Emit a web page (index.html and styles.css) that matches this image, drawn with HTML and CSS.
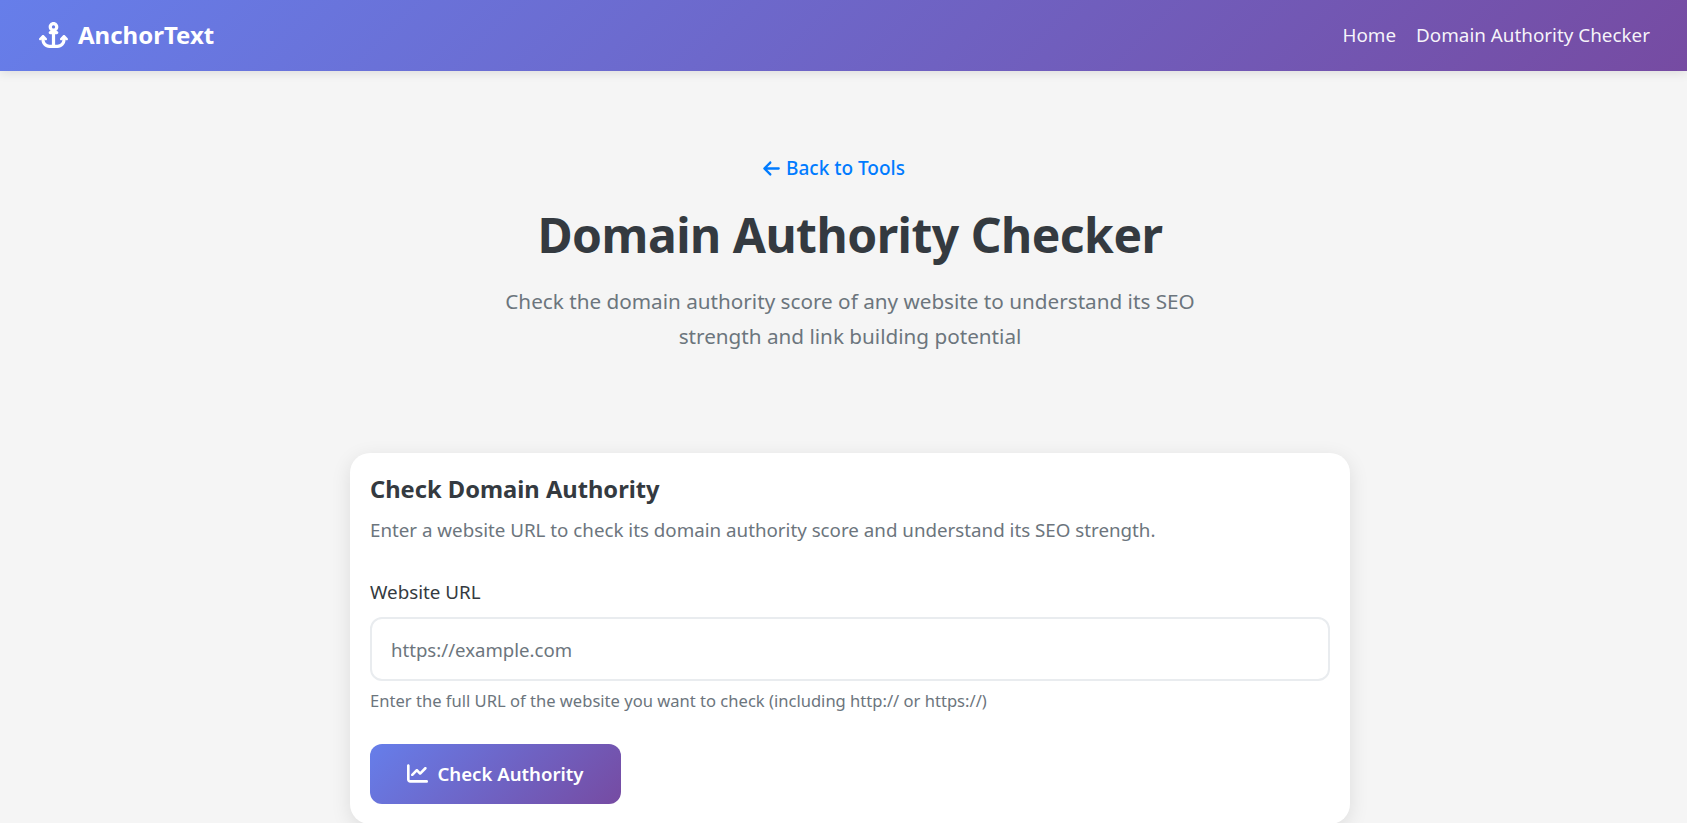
FILE: index.html
```html
<!DOCTYPE html>
<html>
<head>
    <link rel="stylesheet" href="styles.css">
</head>
<body>
    <header class="site-header">
        <a class="brand" href="#">
            <svg class="brand-icon" viewBox="0 0 576 512"><path fill="currentColor" d="M320 96a32 32 0 1 1 -64 0 32 32 0 1 1 64 0zm21.1 80C367 158.8 384 129.4 384 96c0-53-43-96-96-96s-96 43-96 96c0 33.4 17 62.8 42.9 80H224c-17.7 0-32 14.3-32 32s14.3 32 32 32h32V448H208c-53 0-96-43-96-96v-6.1l7 7c9.4 9.4 24.6 9.4 33.9 0s9.4-24.6 0-33.9L97 263c-9.4-9.4-24.6-9.4-33.9 0L7 319c-9.4 9.4-9.4 24.6 0 33.9s24.6 9.4 33.9 0l7-7V352c0 88.4 71.6 160 160 160h80 80c88.4 0 160-71.6 160-160v-6.1l7 7c9.4 9.4 24.6 9.4 33.9 0s9.4-24.6 0-33.9l-56-56c-9.4-9.4-24.6-9.4-33.9 0l-56 56c-9.4 9.4-9.4 24.6 0 33.9s24.6 9.4 33.9 0l7-7V352c0 53-43 96-96 96H320V240h32c17.7 0 32-14.3 32-32s-14.3-32-32-32H341.1z"/></svg>
            AnchorText
        </a>
        <nav class="nav">
            <a href="#">Home</a>
            <a href="#">Domain Authority Checker</a>
        </nav>
    </header>
    <main class="page">
        <section class="hero">
            <a class="back-link" href="#">
                <svg class="back-icon" viewBox="0 0 448 512"><path fill="currentColor" d="M9.4 233.4c-12.5 12.5-12.5 32.8 0 45.3l160 160c12.5 12.5 32.8 12.5 45.3 0s12.5-32.8 0-45.3L109.2 288 416 288c17.7 0 32-14.3 32-32s-14.3-32-32-32l-306.7 0L214.6 118.6c12.5-12.5 12.5-32.8 0-45.3s-32.8-12.5-45.3 0l-160 160z"/></svg>
                Back to Tools
            </a>
            <h1>Domain Authority Checker</h1>
            <p class="lead">Check the domain authority score of any website to understand its SEO strength and link building potential</p>
        </section>
        <section class="card">
            <h2>Check Domain Authority</h2>
            <p class="card-text">Enter a website URL to check its domain authority score and understand its SEO strength.</p>
            <form class="form">
                <label class="label" for="url">Website URL</label>
                <input class="input" id="url" type="text" placeholder="https://example.com">
                <small class="hint">Enter the full URL of the website you want to check (including http:// or https://)</small>
                <button class="btn" type="button">
                    <svg class="btn-icon" viewBox="0 0 512 512"><path fill="currentColor" d="M64 64c0-17.7-14.3-32-32-32S0 46.3 0 64V400c0 44.2 35.8 80 80 80H480c17.7 0 32-14.3 32-32s-14.3-32-32-32H80c-8.8 0-16-7.2-16-16V64zm406.6 86.6c12.5-12.5 12.5-32.8 0-45.3s-32.8-12.5-45.3 0L320 210.7l-57.4-57.4c-12.5-12.5-32.8-12.5-45.3 0l-112 112c-12.5 12.5-12.5 32.8 0 45.3s32.8 12.5 45.3 0L240 221.3l57.4 57.4c12.5 12.5 32.8 12.5 45.3 0l128-128z"/></svg>
                    Check Authority
                </button>
            </form>
        </section>
    </main>
</body>
</html>
```

FILE: styles.css
```css
* {
    box-sizing: border-box;
}
body {
    font-family: "Noto Sans", "Open Sans", sans-serif;
    background: #f5f5f5;
    color: #343a40;
    margin: 0;
    padding: 0;
    height: 823px;
    overflow: hidden;
}
a {
    text-decoration: none;
}
.site-header {
    background: linear-gradient(135deg, #667eea 0%, #764ba2 100%);
    height: 71px;
    padding: 0 37px 2px 39px;
    display: flex;
    align-items: center;
    justify-content: space-between;
    box-shadow: 0 2px 10px rgba(0, 0, 0, 0.1);
    position: relative;
}
.brand {
    display: flex;
    align-items: center;
    gap: 10px;
    color: #fff;
    font-size: 24px;
    font-weight: 700;
}
.brand-icon {
    width: 29px;
    height: 26px;
}
.nav {
    display: flex;
    gap: 20px;
}
.nav a {
    color: rgba(255, 255, 255, 0.95);
    font-size: 18.85px;
}
.page {
    display: flex;
    flex-direction: column;
    align-items: center;
    padding-left: 13px;
}
.hero {
    text-align: center;
    padding-top: 84px;
    width: 700px;
}
.back-link {
    display: inline-flex;
    align-items: center;
    gap: 6px;
    margin-right: 32px;
    color: #007bff;
    font-size: 19px;
    font-weight: 500;
}
.back-icon {
    width: 17px;
    height: 19px;
}
h1 {
    margin: 19px 0 0;
    font-size: 48px;
    line-height: 66px;
    font-weight: 700;
    letter-spacing: -0.5px;
}
.lead {
    margin: 16px 0 0;
    font-size: 20.7px;
    line-height: 35px;
    color: #6c757d;
}
.card {
    background: #fff;
    width: 1000px;
    margin-top: 99px;
    padding: 20px;
    border-radius: 20px;
    box-shadow: 0 5px 20px rgba(0, 0, 0, 0.1);
}
h2 {
    margin: 0;
    font-size: 23.7px;
    line-height: 32px;
    font-weight: 700;
}
.card-text {
    margin: 10px 0 0;
    font-size: 18.75px;
    line-height: 30px;
    color: #6c757d;
}
.form {
    display: flex;
    flex-direction: column;
    align-items: flex-start;
    margin-top: 32px;
}
.label {
    font-size: 18.8px;
    line-height: 30px;
}
.input {
    width: 100%;
    height: 64px;
    margin-top: 10px;
    padding: 2px 19px 0;
    border: 2px solid #e9ecef;
    border-radius: 12px;
    font-family: inherit;
    font-size: 18.6px;
    color: #343a40;
    background: #fff;
}
.input::placeholder {
    color: #6c757d;
}
.hint {
    margin-top: 6px;
    font-size: 16.57px;
    line-height: 27px;
    color: #6c757d;
}
.btn {
    display: inline-flex;
    align-items: center;
    gap: 9px;
    margin-top: 30px;
    height: 60px;
    width: 251px;
    justify-content: center;
    border: 0;
    border-radius: 12px;
    background: linear-gradient(135deg, #667eea 0%, #764ba2 100%);
    color: #fff;
    font-family: inherit;
    font-size: 18.6px;
    font-weight: 600;
}
.btn-icon {
    width: 21px;
    height: 21px;
}
```
